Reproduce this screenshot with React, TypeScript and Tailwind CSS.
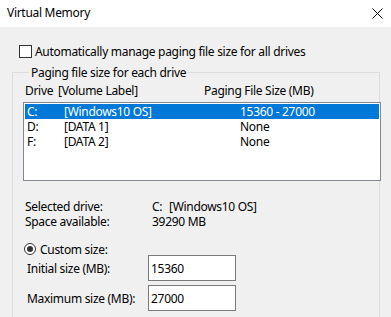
import React from "react";

const font = { fontFamily: '"Noto Sans", "Liberation Sans", sans-serif' };

export default function App() {
  return (
    <div
      className="w-[391px] h-[317px] overflow-hidden flex flex-col text-[12px] text-black bg-[#f0f0f0] leading-[15px] tracking-[-0.3px]"
      style={font}
    >
      {/* Title bar */}
      <div className="h-[27px] bg-white flex items-center justify-between pl-[7px] pr-[8px] pb-[3px] shrink-0">
        <span className="text-[12px]">Virtual Memory</span>
        <svg width="11" height="11" viewBox="0 0 11 11" className="mt-[2px]">
          <path d="M0.5 0.5 L10.5 10.5 M10.5 0.5 L0.5 10.5" stroke="#000" strokeWidth="1" />
        </svg>
      </div>

      {/* Body */}
      <div className="flex-1 flex flex-col pl-[12px] pr-[11px]">
        <div className="flex items-center mt-[18px] ml-[7px] h-[13px]">
          <span className="w-[13px] h-[13px] border border-[#333] bg-white shrink-0" />
          <span className="ml-[3px]">Automatically manage paging file size for all drives</span>
        </div>

        <fieldset className="mt-[7px] border border-[#dcdcdc] flex-1 min-h-[300px] pl-[10px] pr-0">
          <legend className="ml-[6px] px-[2px] leading-[15px]">Paging file size for each drive</legend>

          <div className="flex mt-[3px] pl-[2px] h-[15px] items-center">
            <span className="w-[33px]">Drive</span>
            <span className="w-[146px]">[Volume Label]</span>
            <span>Paging File Size (MB)</span>
          </div>

          <div className="mt-[4px] -mr-[2px] h-[79px] border border-[#828790] bg-white p-[1px]">
            <div className="flex h-[15px] items-center bg-[#0078d7] text-white">
              <span className="w-[39px] pl-[2px]">C:</span>
              <span className="w-[176px]">[Windows10 OS]</span>
              <span>15360 - 27000</span>
            </div>
            <div className="flex h-[15px] items-center">
              <span className="w-[39px] pl-[2px]">D:</span>
              <span className="w-[176px]">[DATA 1]</span>
              <span>None</span>
            </div>
            <div className="flex h-[15px] items-center">
              <span className="w-[39px] pl-[2px]">F:</span>
              <span className="w-[176px]">[DATA 2]</span>
              <span>None</span>
            </div>
          </div>

          <div className="mt-[18px] pl-[2px] flex flex-col">
            <div className="flex h-[15px] items-center">
              <span className="w-[127px]">Selected drive:</span>
              <span className="w-[17px]">C:</span>
              <span>[Windows10 OS]</span>
            </div>
            <div className="flex h-[15px] items-center">
              <span className="w-[127px]">Space available:</span>
              <span>39290 MB</span>
            </div>
          </div>

          <div className="mt-[14px] flex items-center h-[12px] ml-[1px]">
            <span className="w-[12px] h-[12px] rounded-full border border-[#333] bg-white flex items-center justify-center shrink-0">
              <span className="w-[6px] h-[6px] rounded-full bg-[#333]" />
            </span>
            <span className="ml-[4px]">Custom size:</span>
          </div>

          <div className="mt-[0px] flex flex-col gap-[4px]">
            <div className="flex items-center">
              <span className="w-[125px] pl-[4px]">Initial size (MB):</span>
              <div className="w-[88px] h-[26px] border border-[#7a7a7a] bg-white pl-[2px] flex items-center">15360</div>
            </div>
            <div className="flex items-center">
              <span className="w-[125px] pl-[4px]">Maximum size (MB):</span>
              <div className="w-[88px] h-[26px] border border-[#7a7a7a] bg-white pl-[2px] flex items-center">27000</div>
            </div>
          </div>
        </fieldset>
      </div>
    </div>
  );
}
